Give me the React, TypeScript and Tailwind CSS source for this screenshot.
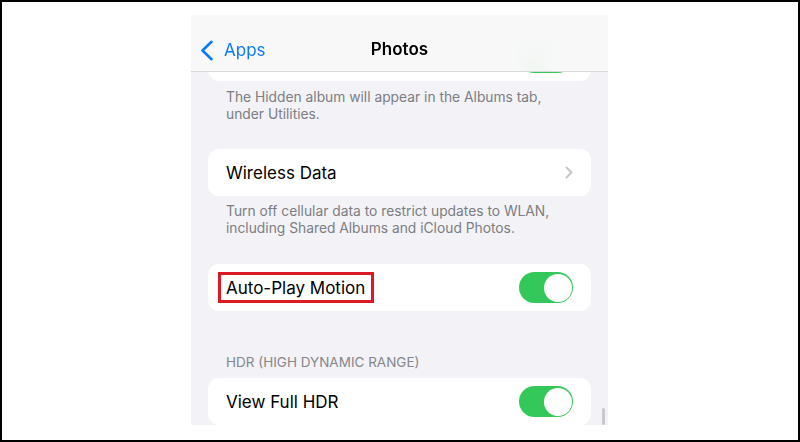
import React from "react";

const font = { fontFamily: "Inter, 'Noto Sans', sans-serif" };

function Toggle() {
  return (
    <div className="flex h-[31px] w-[54px] shrink-0 items-center justify-end rounded-full bg-[#34c759] pr-[1.5px]">
      <div className="h-[28px] w-[28px] rounded-full bg-white" />
    </div>
  );
}

function Footnote({ children }: { children: React.ReactNode }) {
  return (
    <div className="px-[35px] text-[13.8px] leading-[17px] text-[#7d7d82]">{children}</div>
  );
}

export default function App() {
  return (
    <div
      className="h-[442px] w-[800px] overflow-hidden border-2 border-black bg-white pl-[189px] pt-[13px]"
      style={font}
    >
      <div className="relative h-[410px] w-[417px] overflow-hidden bg-[#f2f2f7]">
        {/* content */}
        <div className="flex flex-col">
          <div className="mx-[17px] mt-[19px] flex h-[47px] items-center justify-end rounded-[11px] bg-white px-[18px]">
            <Toggle />
          </div>
          <div className="mt-[8px]">
            <Footnote>
              The Hidden album will appear in the Albums tab,
              <br />
              under Utilities.
            </Footnote>
          </div>
          <div className="mx-[17px] mt-[26px] flex h-[47px] items-center justify-between rounded-[11px] bg-white pl-[18px] pr-[18px]">
            <span className="text-[17px] leading-[22px] text-black">Wireless Data</span>
            <svg width="8" height="13" viewBox="0 0 8 13" fill="none">
              <path d="M1.5 1.5 L6.5 6.5 L1.5 11.5" stroke="#c4c4c7" strokeWidth="1.8" strokeLinecap="round" strokeLinejoin="round" />
            </svg>
          </div>
          <div className="mt-[7px]">
            <Footnote>
              Turn off cellular data to restrict updates to WLAN,
              <br />
              including Shared Albums and iCloud Photos.
            </Footnote>
          </div>
          <div className="mx-[17px] mt-[27px] flex h-[47px] items-center justify-between rounded-[11px] bg-white px-[18px]">
            <span className="relative text-[17px] leading-[22px] text-black">
              Auto-Play Motion
              <span className="absolute -bottom-[4px] -left-[8px] -right-[9px] -top-[5px] border-[3px] border-[#dc1a26]" />
            </span>
            <Toggle />
          </div>
          <div className="mt-[43px] px-[35px] text-[13.5px] leading-[17px] text-[#86868b]">
            HDR (HIGH DYNAMIC RANGE)
          </div>
          <div className="mx-[17px] mt-[7px] flex h-[47px] items-center justify-between rounded-[11px] bg-white px-[18px]">
            <span className="text-[17px] leading-[22px] text-black">View Full HDR</span>
            <Toggle />
          </div>
        </div>

        {/* translucent nav bar */}
        <div className="absolute left-0 right-0 top-0 flex h-[57px] items-center border-b border-[#d8d8dc] bg-[rgba(248,248,248,0.97)] pt-[11px] backdrop-blur-md">
          <div className="absolute left-[9px] top-[24px] flex items-center gap-[10px]">
            <svg width="14" height="21" viewBox="0 0 14 21" fill="none">
              <path d="M11.5 1.8 L2.5 10.5 L11.5 19.2" stroke="#0a7aff" strokeWidth="2.6" strokeLinecap="round" strokeLinejoin="round" />
            </svg>
            <span className="text-[17px] leading-[22px] text-[#0a7aff]">Apps</span>
          </div>
          <div className="w-full text-center text-[17px] font-semibold leading-[22px] text-black">Photos</div>
        </div>

        {/* scroll indicator */}
        <div className="absolute bottom-0 right-[3px] h-[17px] w-[3px] rounded-full bg-[#c9c9cd]" />
      </div>
    </div>
  );
}
